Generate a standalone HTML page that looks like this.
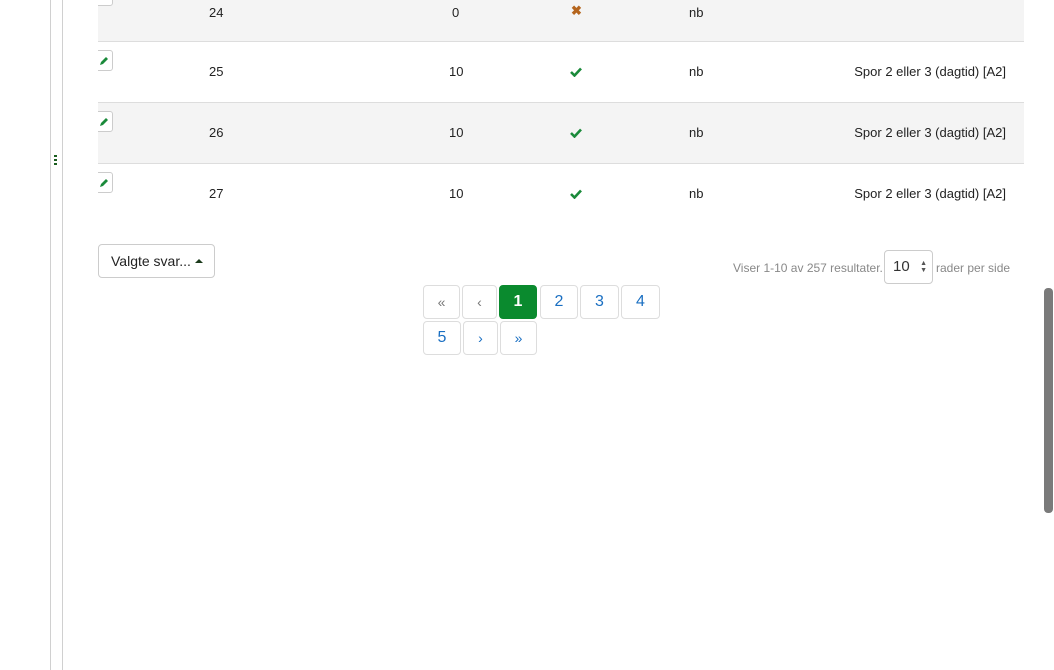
<!DOCTYPE html>
<html><head><style>
*{box-sizing:border-box;margin:0;padding:0}
body{width:1054px;height:670px;background:#fff;font-family:"Liberation Sans",sans-serif;font-size:13px;color:#222;position:relative;overflow:hidden}
.vl{position:absolute;top:0;height:670px;width:1px;background:#d0d0d0}
.row{position:absolute;left:98px;width:926px;height:61px;border-bottom:1px solid #ddd;overflow:hidden}
.g{background:#f4f4f4}
.c{position:absolute;top:22px}
.ed{position:absolute;left:-4px;top:8px;width:19px;height:21px;border:1px solid #ccc;border-radius:0 3px 3px 0;background:#fff}
.ed svg{position:absolute;left:4px;top:5px}
.pb{position:absolute;height:34px;border:1px solid #ddd;border-radius:4px;background:#fff;color:#1a6fc2;font-size:16px;text-align:center;line-height:32px}
</style></head><body>
<div class="vl" style="left:50px"></div>
<div class="vl" style="left:62px"></div>
<div style="position:absolute;left:54px;top:155px;width:3px;height:11px;background:repeating-linear-gradient(#1b5e20 0 2px,transparent 2px 4px)"></div>

<div class="row g" style="top:-19px"><div class="ed" style="top:4px"><svg width="10" height="10" viewBox="0 0 10 10"><path d="M1 9 L2 6 L7 1 L9 3 L4 8 Z" fill="#1a8a3a"/></svg></div>
<span class="c" style="left:111px;top:24px">24</span><span class="c" style="left:354px;top:24px">0</span><span class="c" style="left:473px;top:22px;color:#b5651d;font-weight:bold">✖</span><span class="c" style="left:591px;top:24px">nb</span></div>

<div class="row" style="top:42px"><div class="ed"><svg width="10" height="10" viewBox="0 0 10 10"><path d="M1 9 L2 6 L7 1 L9 3 L4 8 Z" fill="#1a8a3a"/></svg></div>
<span class="c" style="left:111px">25</span><span class="c" style="left:351px">10</span><svg class="c" style="left:472px;top:25px" width="12" height="10" viewBox="0 0 12 10"><path d="M1 5 L4.5 8.5 L11 1.5" stroke="#1a8a3a" stroke-width="2.6" fill="none"/></svg><span class="c" style="left:591px">nb</span><span class="c" style="right:18px">Spor 2 eller 3 (dagtid) [A2]</span></div>

<div class="row g" style="top:103px"><div class="ed"><svg width="10" height="10" viewBox="0 0 10 10"><path d="M1 9 L2 6 L7 1 L9 3 L4 8 Z" fill="#1a8a3a"/></svg></div>
<span class="c" style="left:111px">26</span><span class="c" style="left:351px">10</span><svg class="c" style="left:472px;top:25px" width="12" height="10" viewBox="0 0 12 10"><path d="M1 5 L4.5 8.5 L11 1.5" stroke="#1a8a3a" stroke-width="2.6" fill="none"/></svg><span class="c" style="left:591px">nb</span><span class="c" style="right:18px">Spor 2 eller 3 (dagtid) [A2]</span></div>

<div class="row" style="top:164px;border-bottom:none"><div class="ed"><svg width="10" height="10" viewBox="0 0 10 10"><path d="M1 9 L2 6 L7 1 L9 3 L4 8 Z" fill="#1a8a3a"/></svg></div>
<span class="c" style="left:111px">27</span><span class="c" style="left:351px">10</span><svg class="c" style="left:472px;top:25px" width="12" height="10" viewBox="0 0 12 10"><path d="M1 5 L4.5 8.5 L11 1.5" stroke="#1a8a3a" stroke-width="2.6" fill="none"/></svg><span class="c" style="left:591px">nb</span><span class="c" style="right:18px">Spor 2 eller 3 (dagtid) [A2]</span></div>

<div style="position:absolute;left:98px;top:244px;width:117px;height:34px;border:1px solid #ccc;border-radius:4px;font-size:14px;line-height:32px;padding-left:12px;color:#222">Valgte svar... <span style="display:inline-block;border:4px solid transparent;border-bottom:4px solid #1b3a1b;border-top:none;vertical-align:middle;margin-top:-2px"></span></div>

<div style="position:absolute;left:733px;top:261px;font-size:12px;color:#888">Viser 1-10 av 257 resultater.</div>
<div style="position:absolute;left:884px;top:250px;width:49px;height:34px;border:1px solid #ccc;border-radius:4px;font-size:15px;line-height:32px;padding-left:8px;color:#333">10<span style="position:absolute;right:5px;top:9px;font-size:7px;line-height:7px;color:#555">▲<br>▼</span></div>
<div style="position:absolute;left:936px;top:261px;font-size:12px;color:#888">rader per side</div>

<div class="pb" style="left:423px;top:285px;width:37px;color:#777;font-size:14px">«</div>
<div class="pb" style="left:462px;top:285px;width:35px;color:#777;font-size:14px">‹</div>
<div class="pb" style="left:499px;top:285px;width:38px;background:#0a8a2e;border-color:#0a8a2e;color:#fff;font-weight:bold">1</div>
<div class="pb" style="left:540px;top:285px;width:38px">2</div>
<div class="pb" style="left:580px;top:285px;width:39px">3</div>
<div class="pb" style="left:621px;top:285px;width:39px">4</div>
<div class="pb" style="left:423px;top:321px;width:38px">5</div>
<div class="pb" style="left:463px;top:321px;width:35px;font-size:14px">›</div>
<div class="pb" style="left:500px;top:321px;width:37px;font-size:14px">»</div>

<div style="position:absolute;left:1044px;top:288px;width:9px;height:225px;background:#7a7a7a;border-radius:4px"></div>
</body></html>
